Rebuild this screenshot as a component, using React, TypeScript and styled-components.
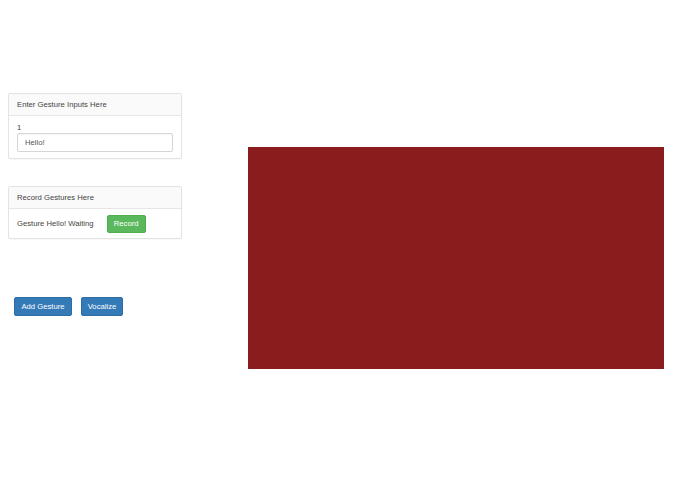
import React from "react";
import styled, { createGlobalStyle } from "styled-components";

const Global = createGlobalStyle`
  html, body { margin: 0; padding: 0; background: #fff; }
  body {
    font-family: "Liberation Sans", Arial, Helvetica, sans-serif;
    font-size: 7.7px;
    line-height: 1.43;
    color: #444;
  }
  * { box-sizing: border-box; }
`;

const Page = styled.div`
  display: flex;
  align-items: flex-start;
  width: 695px;
  height: 494px;
`;

const Sidebar = styled.div`
  display: flex;
  flex-direction: column;
  width: 174px;
  margin-left: 8px;
  margin-top: 93px;
`;

const Panel = styled.div<{ $gapBelow: number }>`
  border: 1px solid #e3e3e3;
  border-radius: 2px;
  background: #fff;
  margin-bottom: ${(p) => p.$gapBelow}px;
  box-shadow: 0 1px 1px rgba(0, 0, 0, 0.03);
`;

const PanelHeading = styled.div`
  height: 22px;
  display: flex;
  align-items: center;
  padding: 0 8px;
  background: #fafafa;
  border-bottom: 1px solid #e6e6e6;
  color: #444;
`;

const PanelBody = styled.div`
  padding: 5px 8px 6px;
`;

const Label = styled.div`
  height: 12px;
  line-height: 11px;
  padding-top: 1px;
`;

const TextInput = styled.input`
  display: block;
  width: 156px;
  height: 19px;
  border: 1px solid #d6d6d6;
  border-radius: 2px;
  padding: 0 7px;
  font-family: inherit;
  font-size: 7.7px;
  color: #555;
  background: #fff;
  box-shadow: inset 0 1px 1px rgba(0, 0, 0, 0.04);
  outline: none;
`;

const Row = styled.div`
  display: flex;
  align-items: center;
  height: 29px;
  padding: 0 8px;
`;

const Status = styled.span`
  margin-right: 13px;
`;

const Button = styled.button<{ $variant: "success" | "primary"; $w: number }>`
  height: ${(p) => (p.$variant === "success" ? 18 : 19)}px;
  width: ${(p) => p.$w}px;
  padding: 0;
  border-radius: 2px;
  border: 1px solid ${(p) => (p.$variant === "success" ? "#4cae4c" : "#2e6da4")};
  background: ${(p) => (p.$variant === "success" ? "#5cb85c" : "#337ab7")};
  color: #fff;
  font-family: inherit;
  font-size: 7.7px;
  line-height: 1;
  cursor: pointer;
`;

const ButtonBar = styled.div`
  display: flex;
  gap: 9px;
  padding-left: 6px;
`;

const Canvas = styled.div`
  width: 416px;
  height: 222px;
  margin-left: 66px;
  margin-top: 147px;
  background: #8b1c1e;
  flex-shrink: 0;
`;

export default function App() {
  return (
    <>
      <Global />
      <Page>
        <Sidebar>
          <Panel $gapBelow={27}>
            <PanelHeading>Enter Gesture Inputs Here</PanelHeading>
            <PanelBody>
              <Label>1</Label>
              <TextInput defaultValue="Hello!" />
            </PanelBody>
          </Panel>
          <Panel $gapBelow={58}>
            <PanelHeading>Record Gestures Here</PanelHeading>
            <Row>
              <Status>Gesture Hello! Waiting</Status>
              <Button $variant="success" $w={39}>Record</Button>
            </Row>
          </Panel>
          <ButtonBar>
            <Button $variant="primary" $w={58}>Add Gesture</Button>
            <Button $variant="primary" $w={42}>Vocalize</Button>
          </ButtonBar>
        </Sidebar>
        <Canvas />
      </Page>
    </>
  );
}
